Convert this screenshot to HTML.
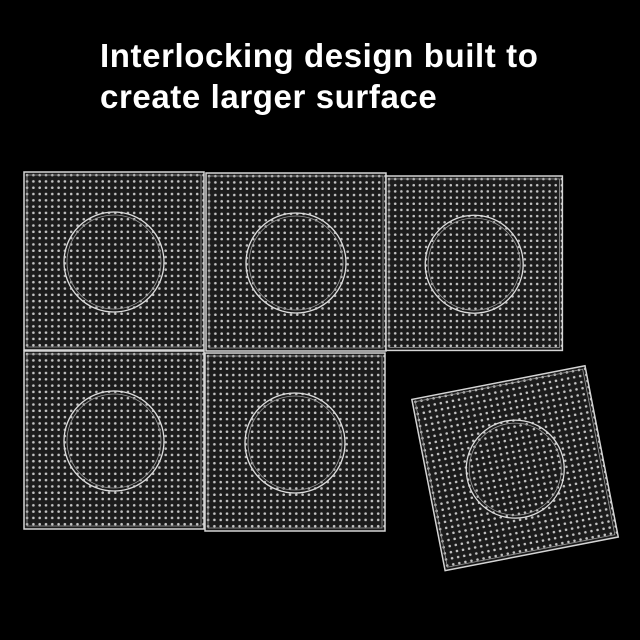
<!DOCTYPE html>
<html><head><meta charset="utf-8"><style>
html,body{margin:0;padding:0;background:#000;width:640px;height:640px;overflow:hidden}
.t{position:absolute;left:100px;top:35px;color:#fff;font:bold 33px/41px "Liberation Sans",sans-serif;letter-spacing:0.6px}
svg{position:absolute;left:0;top:0}
</style></head><body>
<svg width="640" height="640" viewBox="0 0 640 640">
<defs>
<pattern id="p" width="6.3" height="6.3" patternUnits="userSpaceOnUse">
<rect width="6.3" height="6.3" fill="#1c1c1c"/>
<circle cx="3.1" cy="3.1" r="1.3" fill="#c4c4c4"/>
</pattern>
<g id="b">
<rect x="0" y="0" width="180" height="178" fill="url(#p)" stroke="#d5d5d5" stroke-width="1.5"/>
<rect x="3" y="3" width="174" height="172" fill="none" stroke="#999" stroke-width="0.8"/>
<circle cx="90" cy="90" r="50" fill="none" stroke="#ddd" stroke-width="1.3"/>
<circle cx="90" cy="90" r="47" fill="none" stroke="#999" stroke-width="0.8"/>
</g>
</defs>
<use href="#b" x="24" y="172"/>
<use href="#b" x="206" y="173"/>
<use href="#b" x="386" y="176" transform="translate(386 176) scale(0.98) translate(-386 -176)"/>
<use href="#b" x="24" y="351"/>
<use href="#b" x="205" y="353"/>
<g transform="translate(515 469) rotate(-11) translate(-88 -88)">
<use href="#b" x="0" y="0" transform="scale(0.98)"/>
</g>
</svg>
<div class="t">Interlocking design built to<br>create larger surface</div>
</body></html>
